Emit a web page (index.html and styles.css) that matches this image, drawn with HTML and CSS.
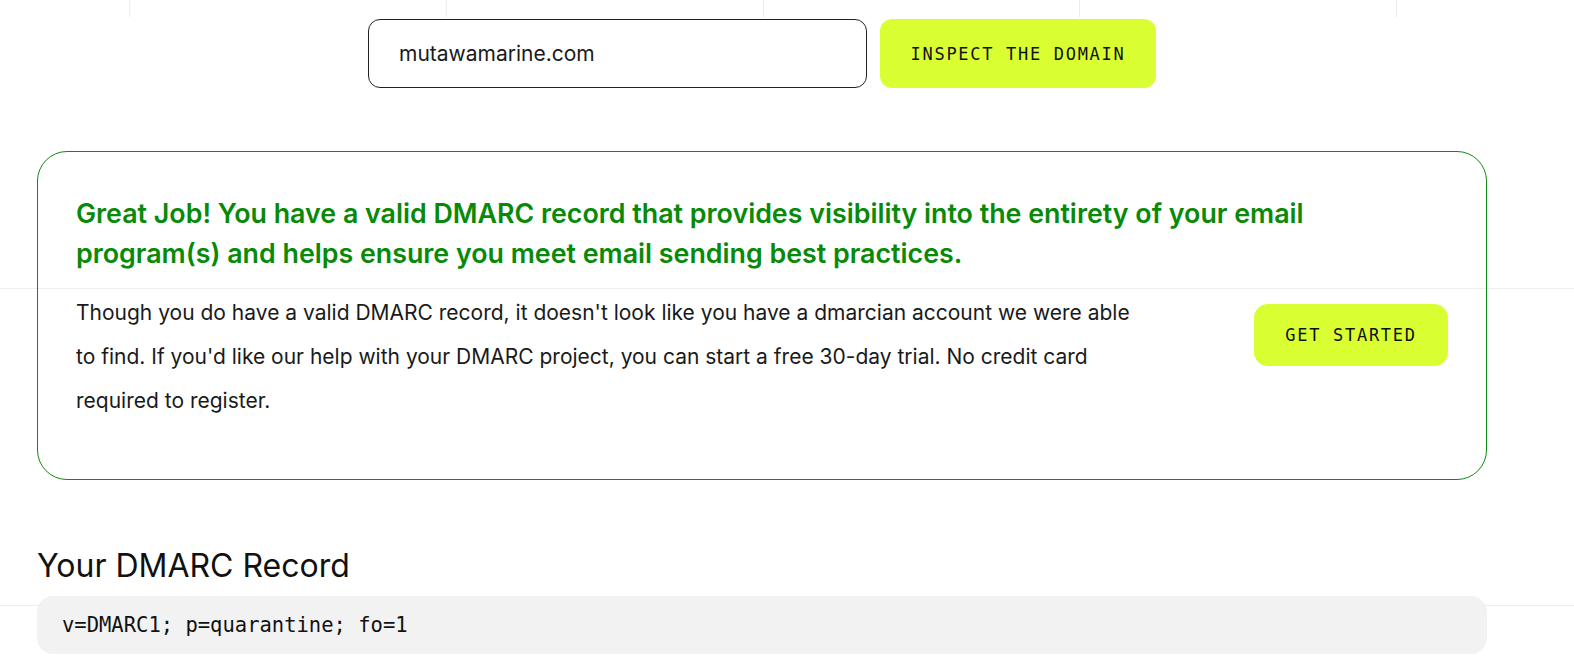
FILE: index.html
```html
<!DOCTYPE html>
<html lang="en">
<head>
<meta charset="utf-8">
<title>DMARC Domain Checker</title>
<link rel="stylesheet" href="styles.css">
</head>
<body>
<div class="page">
  <div class="top-lines">
    <span></span><span></span><span></span><span></span><span></span>
  </div>
  <div class="container">
    <form class="search" onsubmit="return false;">
      <input class="domain-input" type="text" value="mutawamarine.com">
      <button class="btn btn-inspect" type="submit">INSPECT THE DOMAIN</button>
    </form>

    <section class="result-card">
      <h2 class="result-title">Great Job! You have a valid DMARC record that provides visibility into the entirety of your email program(s) and helps ensure you meet email sending best practices.</h2>
      <div class="result-row">
        <p class="result-text">Though you do have a valid DMARC record, it doesn't look like you have a dmarcian account we were able to find. If you'd like our help with your DMARC project, you can start a free 30-day trial. No credit card required to register.</p>
        <a class="btn btn-start" href="#">GET STARTED</a>
      </div>
    </section>

    <h3 class="record-title">Your DMARC Record</h3>
    <div class="record-code">v=DMARC1; p=quarantine; fo=1</div>
  </div>
</div>
</body>
</html>
```

FILE: styles.css
```css
* { box-sizing: border-box; }

html, body {
  margin: 0;
  padding: 0;
  background: #ffffff;
}

body {
  font-family: Inter, "Noto Sans", sans-serif;
  color: #1a1a1a;
  overflow: hidden;
}

.page {
  min-height: 660px;
  background:
    linear-gradient(#efefef, #efefef) 0 288px / 100% 1px no-repeat,
    linear-gradient(#efefef, #efefef) 0 605px / 100% 1px no-repeat,
    #ffffff;
}

.top-lines {
  display: grid;
  grid-template-columns: repeat(4, 316.75px) 1fr;
  margin-left: 129px;
  height: 17px;
}

.top-lines span {
  border-left: 1px solid #ececec;
}

.container {
  margin-left: 37px;
  width: 1450px;
}

.search {
  display: flex;
  justify-content: center;
  gap: 13px;
  margin: 2px 0 0;
}

.domain-input {
  width: 499px;
  height: 69px;
  border: 1px solid #222;
  border-radius: 12px;
  padding: 0 30px;
  font-family: Inter, "Noto Sans", sans-serif;
  font-size: 21px;
  color: #1a1a1a;
  outline: none;
}

.btn {
  display: inline-flex;
  align-items: center;
  justify-content: center;
  background: #d9ff33;
  color: #111;
  border: none;
  font-family: "DejaVu Sans Mono", "Liberation Mono", monospace;
  font-size: 17px;
  letter-spacing: 1.7px;
  text-decoration: none;
  cursor: pointer;
}

.btn-inspect {
  width: 276px;
  height: 69px;
  border-radius: 12px;
}

.result-card {
  margin-top: 63px;
  border: 1px solid #0f8a0f;
  border-radius: 30px;
  padding: 41px 38px 56px;
}

.result-title {
  margin: 0;
  font-size: 26.8px;
  line-height: 40px;
  font-weight: 600;
  color: #088a08;
  max-width: 1320px;
}

.result-row {
  display: flex;
  justify-content: space-between;
  align-items: flex-start;
  margin-top: 18px;
}

.result-text {
  margin: 0;
  max-width: 1064px;
  font-size: 21px;
  line-height: 44px;
}

.btn-start {
  margin-top: 13px;
  width: 194px;
  height: 62px;
  border-radius: 14px;
}

.record-title {
  margin: 66px 0 0;
  font-size: 32px;
  line-height: 40px;
  font-weight: 400;
  color: #111;
}

.record-code {
  margin-top: 10px;
  height: 58px;
  display: flex;
  align-items: center;
  padding: 0 25px;
  background: #f2f2f2;
  border-radius: 16px;
  font-family: "DejaVu Sans Mono", "Liberation Mono", monospace;
  font-size: 20.5px;
  color: #111;
}
```
